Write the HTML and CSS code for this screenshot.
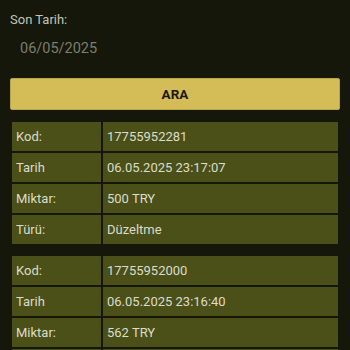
FILE: index.html
```html
<!DOCTYPE html>
<html>
<head>
<meta charset="utf-8">
<link rel="stylesheet" href="styles.css">
</head>
<body>
<div class="page">
  <div class="label">Son Tarih:</div>
  <div class="date">06/05/2025</div>
  <button class="btn">ARA</button>
  <table class="tbl">
    <tr><td class="k">Kod:</td><td>17755952281</td></tr>
    <tr><td class="k">Tarih</td><td>06.05.2025 23:17:07</td></tr>
    <tr><td class="k">Miktar:</td><td>500 TRY</td></tr>
    <tr><td class="k">Türü:</td><td>Düzeltme</td></tr>
  </table>
  <table class="tbl">
    <tr><td class="k">Kod:</td><td>17755952000</td></tr>
    <tr><td class="k">Tarih</td><td>06.05.2025 23:16:40</td></tr>
    <tr><td class="k">Miktar:</td><td>562 TRY</td></tr>
    <tr><td class="k">Türü:</td><td>Düzeltme</td></tr>
  </table>
</div>
</body>
</html>
```
FILE: styles.css
```css
html, body {
  margin: 0;
  padding: 0;
  background: #15170a;
  font-family: Roboto, "Noto Sans", sans-serif;
  overflow: hidden;
}
.page {
  padding: 10px;
  display: flex;
  flex-direction: column;
}
.label {
  color: #c4c4b8;
  font-size: 13px;
  line-height: 18px;
  margin-top: 1px;
}
.date {
  color: #7d7d6e;
  font-size: 14.5px;
  line-height: 20px;
  padding: 9px 10px 0 10px;
  height: 40px;
  box-sizing: border-box;
  margin-top: 1px;
}
.btn {
  margin-top: 8px;
  height: 32px;
  background: #d4bc56;
  border: 1px solid #b9a44a;
  border-radius: 2px;
  color: #1c1a0c;
  font-family: Roboto, "Noto Sans", sans-serif;
  font-weight: bold;
  font-size: 13.5px;
  padding: 0;
}
.tbl {
  margin-top: 10px;
  border-spacing: 2px;
  width: 100%;
}
.tbl + .tbl {
  margin-top: 8px;
}
.tbl td {
  background: #4a5017;
  color: #dcdccc;
  font-size: 13px;
  height: 29px;
  padding: 0 4px;
  box-sizing: border-box;
}
.tbl td.k {
  width: 89px;
}
```
